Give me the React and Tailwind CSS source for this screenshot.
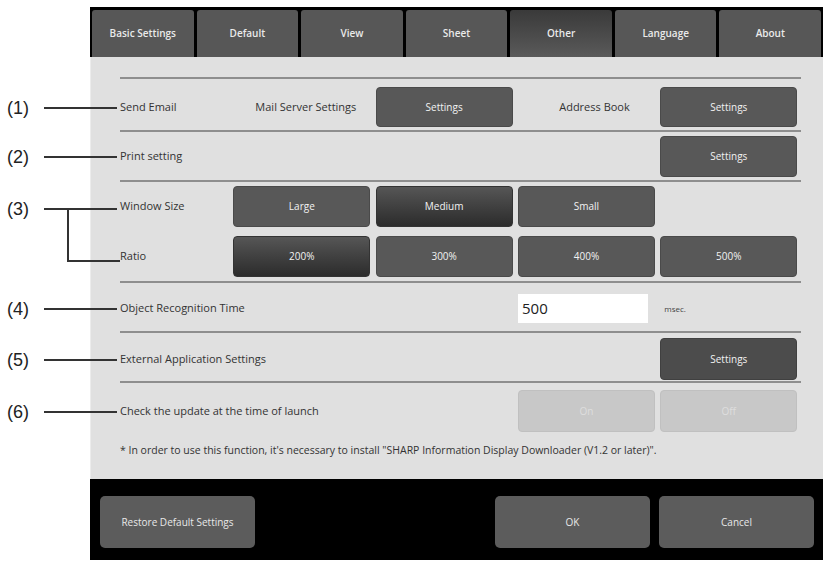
import React from "react";

const tabs = ["Basic Settings", "Default", "View", "Sheet", "Other", "Language", "About"];

const callouts = [
  { n: "(1)", y: 108 },
  { n: "(2)", y: 157 },
  { n: "(3)", y: 209 },
  { n: "(4)", y: 309 },
  { n: "(5)", y: 360 },
  { n: "(6)", y: 412 },
];

function Btn({ children, active, dark, disabled, className = "" }) {
  let tone = "bg-[#585858] text-[#f2f2f2] border-[#4a4a4a]";
  if (dark) tone = "bg-[#4c4c4c] text-[#f2f2f2] border-[#404040]";
  if (active) tone = "bg-gradient-to-b from-[#565656] to-[#2c2c2c] text-[#f2f2f2] border-[#333]";
  if (disabled) tone = "bg-[#c8c8c8] text-[#dedede] border-[#c0c0c0]";
  return (
    <div
      className={`flex items-center justify-center rounded-[4px] border text-[10px] ${tone} ${className}`}
    >
      {children}
    </div>
  );
}

function Line() {
  return <div className="h-[2px] bg-[#8e8e8e]" />;
}

function Label({ children }) {
  return <div className="text-[11px] text-[#333] whitespace-nowrap">{children}</div>;
}

const row = "grid grid-cols-[108px_137px_137px_137px_137px] gap-x-[5.33px] items-center";

export default function App() {
  return (
    <div className="relative w-[826px] h-[562px] bg-white font-['Open_Sans',sans-serif] overflow-hidden">
      <div className="flex pt-[7px]">
        <div className="w-[90px] shrink-0" />
        <div className="w-[733px] flex flex-col">
          {/* tabs */}
          <div className="bg-black flex gap-[3px] px-[2px] pt-[3px]">
            {tabs.map((t) => (
              <div
                key={t}
                className={`flex-1 h-[47px] rounded-t-[3px] flex items-center justify-center text-[10px] font-semibold text-[#eaeaea] ${
                  t === "Other"
                    ? "bg-gradient-to-b from-[#3a3a3a] to-[#5a5a5a]"
                    : "bg-[#575757]"
                }`}
              >
                {t}
              </div>
            ))}
          </div>

          {/* panel */}
          <div className="h-[422px] bg-[#e0e0e0] border-l border-[#ececec] pl-[29px] pr-[22px] pt-[20px]">
            <Line />
            <div className={`${row} pt-[8px] pb-[3px]`}>
              <Label>Send Email</Label>
              <div className="text-[11px] text-[#333] text-center pl-[8px] whitespace-nowrap">Mail Server Settings</div>
              <Btn className="h-[40px]">Settings</Btn>
              <div className="text-[11px] text-[#333] text-center pl-[16px]">Address Book</div>
              <Btn className="h-[40px]">Settings</Btn>
            </div>
            <Line />
            <div className={`${row} pt-[4px] pb-[3px]`}>
              <Label>Print setting</Label>
              <div />
              <div />
              <div />
              <Btn className="h-[41px]">Settings</Btn>
            </div>
            <Line />
            <div className={`${row} gap-y-[9px] pt-[4px] pb-[4px]`}>
              <Label>Window Size</Label>
              <Btn className="h-[41px]">Large</Btn>
              <Btn active className="h-[41px]">Medium</Btn>
              <Btn className="h-[41px]">Small</Btn>
              <div />
              <Label>Ratio</Label>
              <Btn active className="h-[41px]">200%</Btn>
              <Btn className="h-[41px]">300%</Btn>
              <Btn className="h-[41px]">400%</Btn>
              <Btn className="h-[41px]">500%</Btn>
            </div>
            <Line />
            <div className={`${row} pt-[11px] pb-[8px]`}>
              <Label>Object Recognition Time</Label>
              <div />
              <div />
              <div className="h-[29px] bg-white mr-[7px] flex items-center pl-[4px] text-[15px] text-[#222]">
                500
              </div>
              <div className="text-[8px] text-[#444] pl-[4px]">msec.</div>
            </div>
            <Line />
            <div className={`${row} pt-[5px] pb-[1px]`}>
              <Label>External Application Settings</Label>
              <div />
              <div />
              <div />
              <Btn dark className="h-[42px]">Settings</Btn>
            </div>
            <Line />
            <div className={`${row} pt-[7px]`}>
              <Label>Check the update at the time of launch</Label>
              <div />
              <div />
              <Btn disabled className="h-[42px]">On</Btn>
              <Btn disabled className="h-[42px]">Off</Btn>
            </div>
            <div className="mt-[11px] text-[10.5px] text-[#333] whitespace-nowrap">
              * In order to use this function, it's necessary to install "SHARP Information Display
              Downloader (V1.2 or later)".
            </div>
          </div>

          {/* footer */}
          <div className="h-[81px] bg-black flex items-start pt-[17px] pl-[10px] pr-[9px] gap-[9px]">
            <div className="w-[155px] h-[52px] rounded-[5px] bg-[#5c5c5c] text-[#e8e8e8] text-[10px] flex items-center justify-center">
              Restore Default Settings
            </div>
            <div className="flex-1" />
            <div className="w-[155px] h-[52px] rounded-[5px] bg-[#5c5c5c] text-[#e8e8e8] text-[10px] flex items-center justify-center">
              OK
            </div>
            <div className="w-[155px] h-[52px] rounded-[5px] bg-[#5c5c5c] text-[#e8e8e8] text-[10px] flex items-center justify-center">
              Cancel
            </div>
          </div>
        </div>
      </div>

      {/* callout annotations */}
      {callouts.map((c) => (
        <div
          key={c.n}
          className="absolute left-[7px] flex items-center"
          style={{ top: c.y - 12 }}
        >
          <span className="w-[33px] text-[18px] leading-[24px] text-[#222] font-['Liberation_Sans',Arial,sans-serif]">
            {c.n}
          </span>
          <span className="w-[73px] h-[1.5px] bg-[#333] ml-[4px]" />
        </div>
      ))}
      <div className="absolute left-[67px] top-[209px] w-[1.5px] h-[52px] bg-[#333]" />
      <div className="absolute left-[67px] top-[260px] w-[53px] h-[1.5px] bg-[#333]" />
    </div>
  );
}
